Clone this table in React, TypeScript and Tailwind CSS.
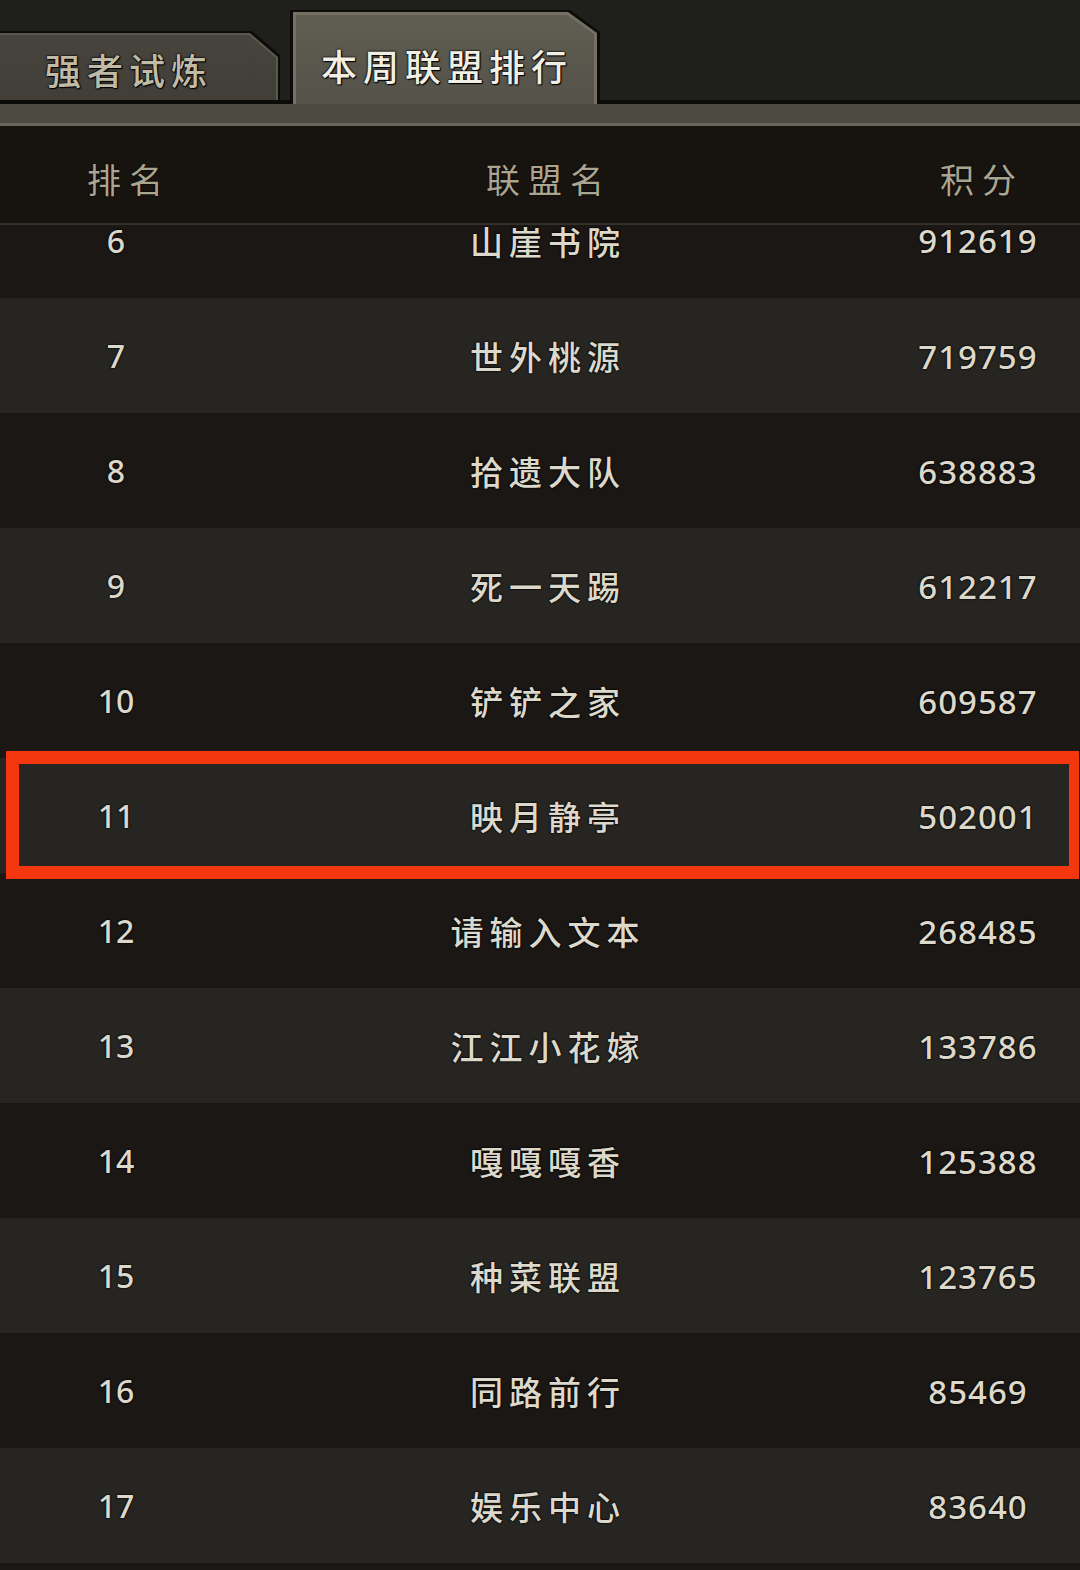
import React from "react";

const rows: { rank: number; name: string; score: string }[] = [
  { rank: 7, name: "世外桃源", score: "719759" },
  { rank: 8, name: "拾遗大队", score: "638883" },
  { rank: 9, name: "死一天踢", score: "612217" },
  { rank: 10, name: "铲铲之家", score: "609587" },
  { rank: 11, name: "映月静亭", score: "502001" },
  { rank: 12, name: "请输入文本", score: "268485" },
  { rank: 13, name: "江江小花嫁", score: "133786" },
  { rank: 14, name: "嘎嘎嘎香", score: "125388" },
  { rank: 15, name: "种菜联盟", score: "123765" },
  { rank: 16, name: "同路前行", score: "85469" },
  { rank: 17, name: "娱乐中心", score: "83640" },
];

const cjk = "[font-family:'Noto_Sans_CJK_SC','Noto_Sans',sans-serif]";
const numCls =
  "text-center font-medium text-[#dcd8cb] [font-family:'Noto_Sans',sans-serif] [text-shadow:0_0_2px_#000,0_0_2px_#000]";
const nameCls =
  "text-center pl-[6px] text-[33px] tracking-[6px] font-medium text-[#dcd8cb] [text-shadow:0_0_2px_#000,0_0_2px_#000] " + cjk;

function Row({ rank, name, score, light }: { rank: number; name: string; score: string; light: boolean }) {
  return (
    <div
      className={
        "grid grid-cols-[232px_626px_222px] items-center h-[115px] pt-[1px] " +
        (light ? "bg-[#262521]" : "bg-[#1b1714]")
      }
    >
      <div className={numCls + " text-[32px] leading-none"}>{rank}</div>
      <div className={nameCls + " leading-none"}>{name}</div>
      <div className={numCls + " pl-[18px] text-[33px] leading-none tracking-[1px]"}>{score}</div>
    </div>
  );
}

export default function App() {
  return (
    <div className="relative w-[1080px] h-[1570px] overflow-hidden bg-[#1b1714] [font-family:'Noto_Sans_CJK_SC','Noto_Sans',sans-serif]">
      {/* Tabs */}
      <div className="flex items-end h-[104px] bg-[#1f201c]">
        <div className="flex flex-col w-[280px] h-[73px]">
          <div className="flex-1 bg-[#0b0b09] pt-[2px] pr-[2px] [clip-path:polygon(0_0,calc(100%-28px)_0,100%_24px,100%_100%,0_100%)]">
            <div className="h-full bg-[#5a584e] pt-[2px] pr-[2px] [clip-path:polygon(0_0,calc(100%-28px)_0,100%_24px,100%_100%,0_100%)]">
              <div className="h-full flex items-center pl-[45px] pt-[2px] bg-[linear-gradient(#46443c,#403e37)] [clip-path:polygon(0_0,calc(100%-27px)_0,100%_23px,100%_100%,0_100%)]">
                <span className="text-[36px] leading-none tracking-[6px] font-medium text-[#bfbba6] [text-shadow:0_0_2px_#000,0_0_2px_#000,1px_1px_1px_#000]">
                  强者试炼
                </span>
              </div>
            </div>
          </div>
          <div className="h-[4px] bg-[#0b0b09]" />
        </div>
        <div className="w-[10px] h-full border-b-[4px] border-[#0b0b09]" />
        <div className="w-[310px] h-[94px] bg-[#0b0b09] px-[3px] pt-[2px] [clip-path:polygon(0_0,calc(100%-30px)_0,100%_22px,100%_100%,0_100%)]">
          <div className="h-full bg-[#747164] px-[3px] pt-[3px] [clip-path:polygon(0_0,calc(100%-29px)_0,100%_21px,100%_100%,0_100%)]">
            <div className="h-full flex items-center pl-[25px] pt-[10px] bg-[linear-gradient(#605d53,#5a574d_50%,#55524a)] [clip-path:polygon(0_0,calc(100%-27px)_0,100%_19px,100%_100%,0_100%)]">
              <span className="text-[36px] leading-none tracking-[6px] font-medium text-[#f1eee4] [text-shadow:0_0_2px_#000,0_0_2px_#000,1px_1px_1px_#000]">
                本周联盟排行
              </span>
            </div>
          </div>
        </div>
        <div className="flex-1 h-full border-b-[4px] border-[#0b0b09]" />
      </div>

      {/* Bar */}
      <div className="h-[22px] bg-[#4c4a41] border-b-[3px] border-[#6a675c]" />

      {/* Header */}
      <div className="grid grid-cols-[232px_626px_222px] items-center h-[99px] pt-[8px] bg-[#17130f] border-b-[2px] border-[#34312b]">
        <div className="text-center pl-[26px] text-[34px] leading-none tracking-[8px] text-[#aaa590] [text-shadow:0_0_2px_#000]">排名</div>
        <div className="text-center pl-[8px] text-[34px] leading-none tracking-[8px] text-[#aaa590] [text-shadow:0_0_2px_#000]">联盟名</div>
        <div className="text-center pl-[26px] text-[34px] leading-none tracking-[8px] text-[#aaa590] [text-shadow:0_0_2px_#000]">积分</div>
      </div>

      {/* List */}
      <div className="flex flex-col">
        {/* partially scrolled row 6 */}
        <div className="grid grid-cols-[232px_626px_222px] items-start h-[73px] bg-[#1b1714]">
          <div className={numCls + " text-[32px] leading-[32px]"}>6</div>
          <div className={nameCls + " leading-[32px]"}>山崖书院</div>
          <div className={numCls + " pl-[18px] text-[33px] leading-[32px] tracking-[1px]"}>912619</div>
        </div>
        {rows.map((r, i) => (
          <Row key={r.rank} rank={r.rank} name={r.name} score={r.score} light={i % 2 === 0} />
        ))}
        <div className="h-[10px] bg-[#1b1714]" />
      </div>

      {/* Highlight box */}
      <div className="absolute left-[6px] top-[751px] w-[1073px] h-[128px] border-[13px] border-r-[10px] border-[#f5370f] pointer-events-none" />
    </div>
  );
}
